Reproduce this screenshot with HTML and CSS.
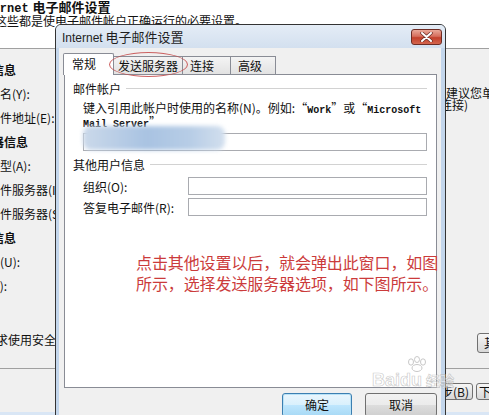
FILE: index.html
```html
<!DOCTYPE html>
<html lang="zh-CN">
<head>
  <meta charset="UTF-8">
  <meta name="viewport" content="width=device-width, initial-scale=1.0">
  <title>Internet 电子邮件设置</title>
  <link rel="stylesheet" href="styles.css">
</head>
<body>
  <!-- wizard window behind -->
  <div class="bgwin">
    <div class="bg-head">
      <div class="bg-title"><span class="mono">Internet</span>电子邮件设置</div>
      <div class="bg-sub">这些都是使电子邮件帐户正确运行的必要设置。</div>
    </div>
    <div class="bg-body">
      <div class="bg-left">
        <div class="row h">用户信息</div>
        <div class="row">您的姓名(Y):</div>
        <div class="row">电子邮件地址(E):</div>
        <div class="row h">服务器信息</div>
        <div class="row">帐户类型(A):</div>
        <div class="row">接收邮件服务器(I):</div>
        <div class="row">发送邮件服务器(SMTP)(O):</div>
        <div class="row h">登录信息</div>
        <div class="row">用户名(U):</div>
        <div class="row">密码(P):</div>
        <div class="row chk">要求使用安全密码验证(SPA)进行登录(Q)</div>
      </div>
      <div class="bg-right">
        <div class="note">建议您单击下面的按钮进行帐户测试</div>
        <div class="note shift">连接)</div>
        <div class="wbtn side-btn">其他设置(M)...</div>
      </div>
    </div>
    <div class="bg-foot">
      <div class="wbtn prev">&lt; 上一步(B)</div>
      <div class="wbtn next">下一步(N) &gt;</div>
    </div>
    <div class="bg-strip"></div>
  </div>

  <!-- settings dialog -->
  <div class="dialog">
    <div class="titlebar">
      <span class="ttl"><span class="lat">Internet</span> 电子邮件设置</span>
      <div class="close">
        <svg width="13" height="10" viewBox="0 0 13 10">
          <path d="M2 1 L11 9 M11 1 L2 9" stroke="#6a2d25" stroke-width="3.4" stroke-linecap="round"/>
          <path d="M2 1 L11 9 M11 1 L2 9" stroke="#fff" stroke-width="2" stroke-linecap="round"/>
        </svg>
      </div>
    </div>
    <div class="client">
      <div class="tabs">
        <div class="tab sel">常规</div>
        <div class="tab wide">发送服务器</div>
        <div class="tab">连接</div>
        <div class="tab last">高级</div>
      </div>
      <div class="mark"></div>
      <div class="panel">
        <div class="group">邮件帐户</div>
        <div class="hint">键入引用此帐户时使用的名称(N)。例如:“<span class="mono">Work</span>”或“<span class="mono">Microsoft</span><br><span class="mono">Mail Server</span>”</div>
        <div class="inp"></div>
        <div class="blob"></div>

        <div class="group g2">其他用户信息</div>
        <div class="field">
          <span class="flabel">组织(O):</span>
          <div class="inp"></div>
        </div>
        <div class="field f2">
          <span class="flabel">答复电子邮件(R):</span>
          <div class="inp"></div>
        </div>

        <div class="note-red">
          点击其他设置以后，就会弹出此窗口，如图<br>
          所示，选择发送服务器选项，如下图所示。
        </div>
      </div>
      <div class="actions">
        <div class="btn default">确定</div>
        <div class="btn cancel">取消</div>
      </div>
    </div>
  </div>

  <div class="wm">
    <svg width="30" height="16" viewBox="0 0 30 16">
      <g fill="none" stroke="#c8c8c8" stroke-width="1">
        <ellipse cx="9" cy="6" rx="2.5" ry="3.2"/>
        <ellipse cx="15" cy="3.5" rx="2.5" ry="3"/>
        <ellipse cx="21" cy="6" rx="2.5" ry="3.2"/>
        <ellipse cx="15" cy="12" rx="5" ry="3.5"/>
      </g>
    </svg>
    <div class="wm-text">Bai<span class="du">du</span><span class="jy">经验</span></div>
  </div>
</body>
</html>
```

FILE: styles.css
```css
* { box-sizing: border-box; }
body {
  margin: 0;
  width: 489px;
  height: 415px;
  overflow: hidden;
  position: relative;
  font-family: "Noto Sans CJK SC", sans-serif;
  font-size: 12px;
  color: #111;
  background: #f0f0f0;
}

/* ---- background wizard ---- */
.bgwin {
  width: 489px;
  height: 415px;
  display: flex;
  flex-direction: column;
}
.bg-head {
  height: 49px;
  background: #fff;
  border-bottom: 1px solid #a0a0a0;
}
.bg-title {
  height: 14px;
  line-height: 14px;
  font-size: 13px;
  font-weight: bold;
  white-space: nowrap;
}
.bg-title .mono {
  font-family: "Liberation Mono", monospace;
  font-size: 12px;
  margin-left: -29px;
  margin-right: 4px;
}
.bg-sub {
  height: 14px;
  line-height: 14px;
  margin-left: -5px;
  white-space: nowrap;
}
.bg-body {
  height: 320px;
  display: flex;
  border-bottom: 1px solid #a0a0a0;
}
.bg-left {
  flex: none;
  width: 482px;
  margin-left: -36px;
  padding-top: 9px;
}
.row {
  height: 24px;
  line-height: 24px;
  white-space: nowrap;
}
.row.h {
  font-weight: bold;
  padding-left: 4px;
}
.row.chk {
  margin-top: 30px;
  padding-left: 20px;
}
.bg-right {
  flex: none;
  width: 200px;
  display: flex;
  flex-direction: column;
  padding-top: 38px;
}
.note {
  line-height: 12px;
  white-space: nowrap;
}
.note.shift { margin-left: -6px; }
.wbtn {
  height: 18px;
  line-height: 16px;
  padding: 0 6px;
  border: 1px solid #707070;
  border-radius: 3px;
  background: linear-gradient(#f6f6f6, #e6e6e6 50%, #d8d8d8);
  white-space: nowrap;
}
.side-btn {
  margin-top: auto;
  margin-bottom: 15px;
  margin-left: 31px;
  height: 20px;
  line-height: 18px;
  align-self: flex-start;
}
.bg-foot {
  height: 43px;
  display: flex;
  gap: 3px;
  padding: 14px 0 0 398px;
}
.bg-foot .wbtn {
  flex: none;
  width: 75px;
  height: 17px;
  line-height: 15px;
}
.bg-foot .prev { text-align: right; padding-right: 3px; }
.bg-foot .next { text-align: left; padding-left: 2px; }
.bg-strip {
  height: 3px;
  background: #d9e6f5;
}

/* ---- dialog ---- */
.dialog {
  position: absolute;
  left: 55px;
  top: 24px;
  width: 391px;
  height: 400px;
  border: 1px solid #333;
  border-radius: 6px 6px 0 0;
  background: #c3d6ec;
  display: flex;
  flex-direction: column;
}
.titlebar {
  height: 23px;
  flex: none;
  display: flex;
  align-items: center;
  border-radius: 5px 5px 0 0;
  background: linear-gradient(#e4ecf6, #d3e0ef);
}
.ttl {
  padding-left: 6px;
  font-size: 13px;
  color: #1e1e1e;
  white-space: nowrap;
}
.ttl .lat {
  font-family: "Liberation Sans", sans-serif;
  font-size: 12px;
}
.close {
  margin-left: auto;
  margin-right: 3px;
  width: 31px;
  height: 16px;
  border: 1px solid #6d2c24;
  border-radius: 3px;
  background: linear-gradient(#e9a898, #d66e5c 45%, #c2402b 55%, #d4654e);
  display: flex;
  align-items: center;
  justify-content: center;
}
.client {
  flex: 1;
  margin: 0 4px 0 3px;
  padding: 5px 4px 0 4px;
  background: #f0f0f0;
  position: relative;
}
.tabs {
  height: 21px;
  display: flex;
  align-items: flex-end;
}
.tab {
  height: 18px;
  line-height: 17px;
  padding: 0 16px 0 7px;
  border: 1px solid #898c95;
  border-bottom: none;
  border-left: none;
  background: linear-gradient(#f4f4f4, #e2e2e2);
  white-space: nowrap;
}
.tab.sel {
  position: relative;
  z-index: 1;
  height: 22px;
  line-height: 19px;
  margin-bottom: -1px;
  padding: 0 17px 0 8px;
  border-left: 1px solid #898c95;
  border-radius: 2px 2px 0 0;
  background: #fff;
}
.tab.wide { padding: 0 4px 0 4px; }
.tab.last { padding-right: 13px; }
.mark {
  position: absolute;
  left: 50px;
  top: 4px;
  width: 79px;
  height: 25px;
  border: 1px solid rgba(196, 72, 72, 0.85);
  border-radius: 50%;
  z-index: 2;
}
.panel {
  position: relative;
  margin-left: 1px;
  width: 373px;
  height: 314px;
  padding: 0 9px 0 8px;
  border: 1px solid #898c95;
  background: #fff;
}
.group {
  display: flex;
  align-items: center;
  height: 16px;
  margin-top: 5px;
  white-space: nowrap;
}
.group::after {
  content: "";
  flex: 1;
  height: 1px;
  margin-left: 5px;
  background: #d2d2d2;
}
.group.g2 { margin-top: 5px; }
.hint {
  margin-top: 6px;
  padding-left: 10px;
  line-height: 11px;
  white-space: nowrap;
}
.hint .mono {
  font-family: "Liberation Mono", monospace;
  font-size: 10px;
  font-weight: bold;
}
.inp {
  height: 18px;
  margin: 3px 0 0 10px;
  border: 1px solid #a9abb0;
  background: #fff;
}
.blob {
  position: absolute;
  left: 18px;
  top: 51px;
  width: 142px;
  height: 24px;
  border-radius: 8px;
  background: linear-gradient(90deg, #cbd9ea, #a9c3e2 45%, #b7cde6 75%, #d2dfee);
  filter: blur(2px);
}
.field {
  display: flex;
  align-items: center;
  height: 18px;
  margin-top: 5px;
  padding-left: 10px;
}
.field.f2 { margin-top: 3px; }
.flabel {
  width: 105px;
  flex: none;
  white-space: nowrap;
}
.field .inp {
  flex: 1;
  margin: 0;
}
.note-red {
  margin: 36px 0 0 63px;
  font-size: 16px;
  line-height: 21px;
  letter-spacing: -0.1px;
  color: #cb3b3b;
  white-space: nowrap;
}
.actions {
  display: flex;
  justify-content: flex-end;
  gap: 13px;
  margin-top: 5px;
}
.btn {
  height: 24px;
  line-height: 22px;
  text-align: center;
  border: 1px solid #707070;
  border-radius: 3px;
  background: linear-gradient(#f2f2f2, #ebebeb 50%, #dddddd 51%, #cfcfcf);
}
.btn.default {
  width: 70px;
  border-color: #3c7fb1;
  box-shadow: inset 0 0 0 1px #b8e2f7;
  background: linear-gradient(#eaf6fd, #d9f0fc 50%, #bee6fd 51%, #a7d9f5);
}
.btn.cancel { width: 72px; }

/* watermark */
.wm {
  position: absolute;
  left: 372px;
  top: 356px;
  z-index: 5;
  pointer-events: none;
}
.wm svg {
  display: block;
  margin-left: 30px;
}
.wm-text {
  font-family: "Liberation Sans", sans-serif;
  font-weight: bold;
  font-size: 18px;
  line-height: 16px;
  color: rgba(255, 255, 255, 0.5);
  -webkit-text-stroke: 0.7px rgba(170, 170, 170, 0.6);
  white-space: nowrap;
}
.wm-text .jy {
  font-family: "Noto Sans CJK SC", sans-serif;
  font-size: 14px;
  margin-left: 4px;
}
```
